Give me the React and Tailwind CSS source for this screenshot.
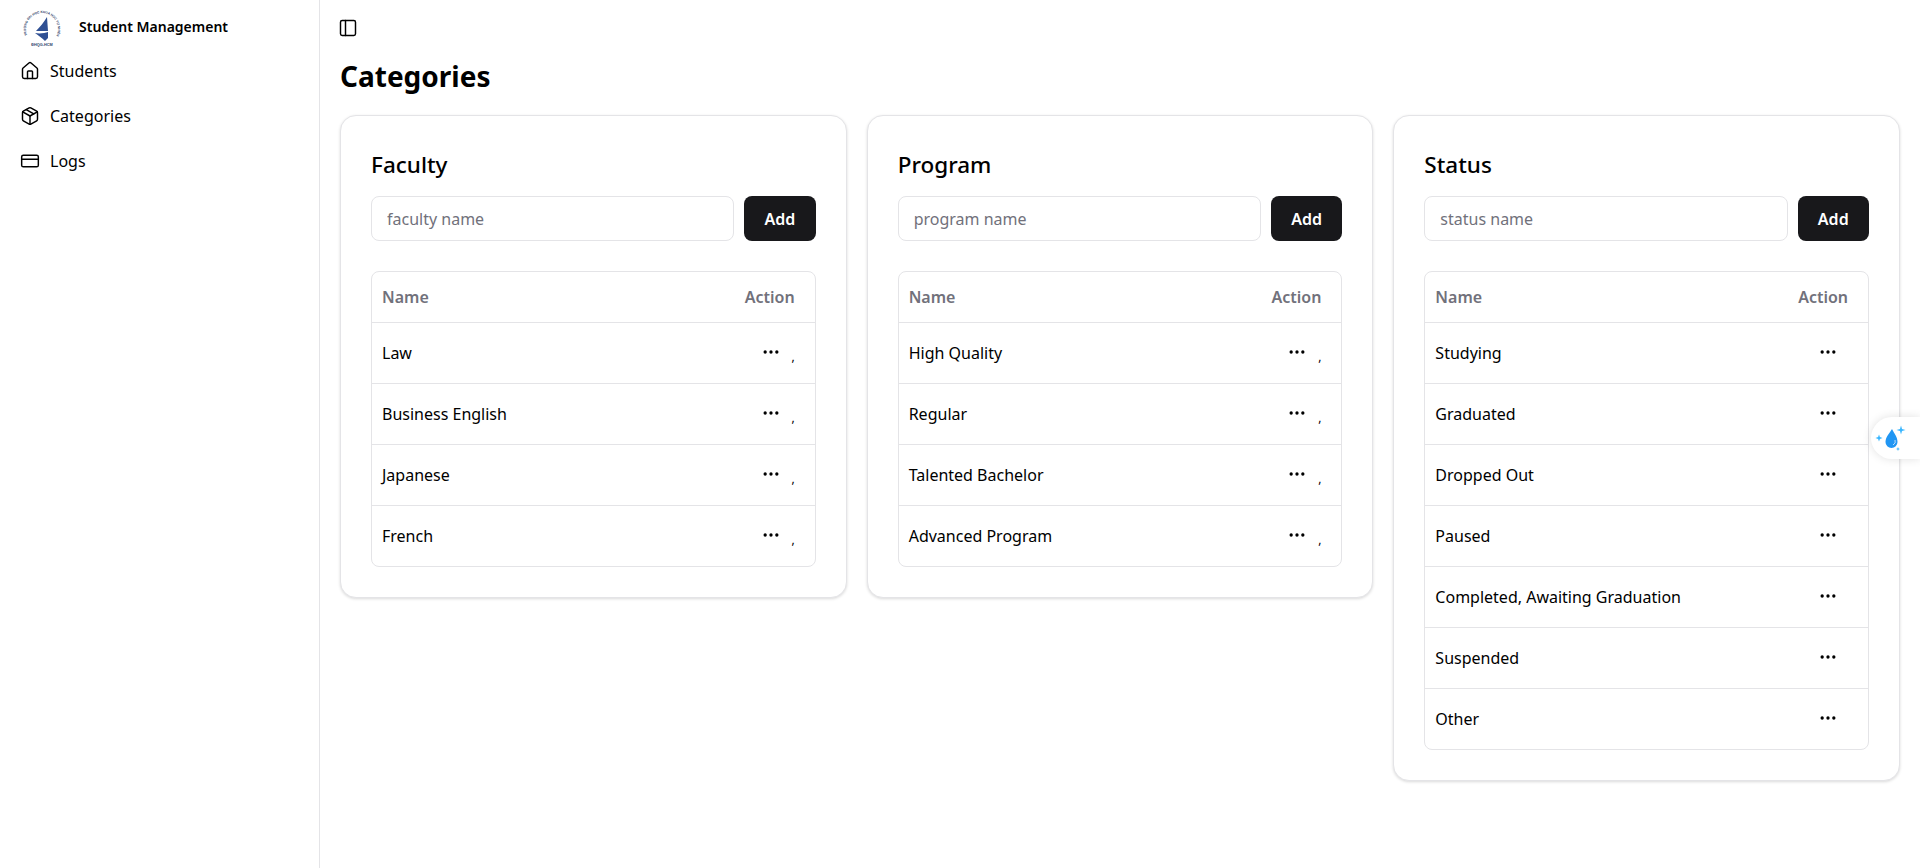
import { House, Package, CreditCard, PanelLeft, Ellipsis } from "lucide-react";

const faculty = ["Law", "Business English", "Japanese", "French"];
const program = ["High Quality", "Regular", "Talented Bachelor", "Advanced Program"];
const status = [
  "Studying",
  "Graduated",
  "Dropped Out",
  "Paused",
  "Completed, Awaiting Graduation",
  "Suspended",
  "Other",
];

function Logo() {
  return (
    <svg width="44" height="44" viewBox="0 0 44 44" className="shrink-0">
      <defs>
        <path id="ring" d="M8.14 33 A16 16 0 1 1 35.86 33" fill="none" />
      </defs>
      <text fontSize="3.2" fill="#2c3c66" fontFamily="Liberation Sans, sans-serif" fontWeight="700">
        <textPath href="#ring" startOffset="2">TRƯỜNG ĐẠI HỌC KHOA HỌC TỰ NHIÊN</textPath>
      </text>
      <text x="22" y="42" fontSize="3.8" fill="#2c3c66" textAnchor="middle" fontFamily="Liberation Sans, sans-serif" fontWeight="700">
        ĐHQG-HCM
      </text>
      <path d="M27 13 L28 27 L16 27 C20 23 24 18 27 13Z" fill="#2f4f93" />
      <path d="M15 29 C20 30 25 29 28 28 L28 34 C27 35 26 36 25 37 C22 34 18 31 15 29Z" fill="#2f4f93" />
    </svg>
  );
}

function NavItem({ icon: Icon, label }) {
  return (
    <div className="flex h-[45px] items-center gap-[10px] pl-5">
      <Icon size={20} strokeWidth={1.75} className="text-black" />
      <span className="text-[16px] text-black">{label}</span>
    </div>
  );
}

function CategoryCard({ title, placeholder, rows, comma }) {
  return (
    <div className="flex-1 rounded-2xl border border-zinc-200 bg-white p-[30px] shadow-[0_1px_3px_rgba(0,0,0,0.15)]">
      <h2 className="mt-[3px] text-[22.5px] leading-[32px] font-medium text-black">{title}</h2>
      <div className="mt-[15px] flex gap-[10px]">
        <input
          placeholder={placeholder}
          className="h-[45px] min-w-0 flex-1 rounded-lg border border-zinc-200 px-[15px] text-[16px] placeholder:text-zinc-500"
        />
        <button className="h-[45px] w-[71.5px] rounded-lg bg-[#18181b] text-[16px] font-semibold text-white">
          Add
        </button>
      </div>
      <div className="mt-[30px] rounded-lg border border-zinc-200">
        <table className="w-full text-[16px]">
          <thead>
            <tr className="h-[50px] border-b border-zinc-200">
              <th className="pl-[10px] text-left font-semibold text-zinc-500">Name</th>
              <th className="w-[100px] pr-[20px] text-right font-semibold text-zinc-500">Action</th>
            </tr>
          </thead>
          <tbody>
            {rows.map((row, i) => (
              <tr key={row} className={i < rows.length - 1 ? "h-[61px] border-b border-zinc-200" : "h-[61px]"}>
                <td className="pl-[10px] text-black">{row}</td>
                <td className="w-[100px]">
                  {comma ? (
                    <div className="relative flex justify-end pr-[34px]">
                      <Ellipsis size={20} className="-translate-y-[1px] text-black" />
                      <span className="absolute top-[5px] right-[20px] text-[12px] text-black">,</span>
                    </div>
                  ) : (
                    <div className="flex justify-end pr-[30px]">
                      <Ellipsis size={20} className="-translate-y-[1px] text-black" />
                    </div>
                  )}
                </td>
              </tr>
            ))}
          </tbody>
        </table>
      </div>
    </div>
  );
}

export default function App() {
  return (
    <div className="flex min-h-screen bg-white font-['Noto_Sans','Open_Sans',sans-serif]">
      <aside className="w-[320px] shrink-0 border-r border-zinc-200">
        <div className="flex h-[48px] items-center gap-[15px] pl-5 pt-1">
          <Logo />
          <span className="text-[14px] font-semibold text-black">Student Management</span>
        </div>
        <nav>
          <NavItem icon={House} label="Students" />
          <NavItem icon={Package} label="Categories" />
          <NavItem icon={CreditCard} label="Logs" />
        </nav>
      </aside>
      <main className="flex-1 px-5">
        <div className="flex h-[57px] items-center">
          <PanelLeft size={20} strokeWidth={1.75} className="-ml-[2px] -translate-y-[1px] text-black" />
        </div>
        <h1 className="h-[58px] text-[28px] leading-[38px] font-bold text-black">Categories</h1>
        <div className="flex items-start gap-5">
          <CategoryCard title="Faculty" placeholder="faculty name" rows={faculty} comma />
          <CategoryCard title="Program" placeholder="program name" rows={program} comma />
          <CategoryCard title="Status" placeholder="status name" rows={status} />
        </div>
      </main>
      <div className="fixed top-[417px] right-0 flex h-[42px] w-[49px] items-center rounded-l-full bg-white pl-[4px] shadow-[0_0_10px_rgba(0,0,0,0.12)]">
        <svg width="32" height="32" viewBox="0 0 32 32">
          <path d="M17 7 C14 12 10.5 15 10.5 20 A6 6 0 0 0 22.5 20 C22.5 15 19.5 12 17 7Z" fill="#2196f3" />
          <path d="M20 18 A4 4 0 0 1 18 23" fill="none" stroke="#bbdefb" strokeWidth="1" />
          <path d="M26 3.5 L27 7 L30.5 8 L27 9 L26 12.5 L25 9 L21.5 8 L25 7Z" fill="#38b6ff" />
          <path d="M4 12.5 L4.9 15 L7.5 16 L4.9 17 L4 19.5 L3.1 17 L0.5 16 L3.1 15Z" fill="#38b6ff" />
          <path d="M23 25 L23.6 26.4 L25 27 L23.6 27.6 L23 29 L22.4 27.6 L21 27 L22.4 26.4Z" fill="#38b6ff" />
        </svg>
      </div>
    </div>
  );
}
